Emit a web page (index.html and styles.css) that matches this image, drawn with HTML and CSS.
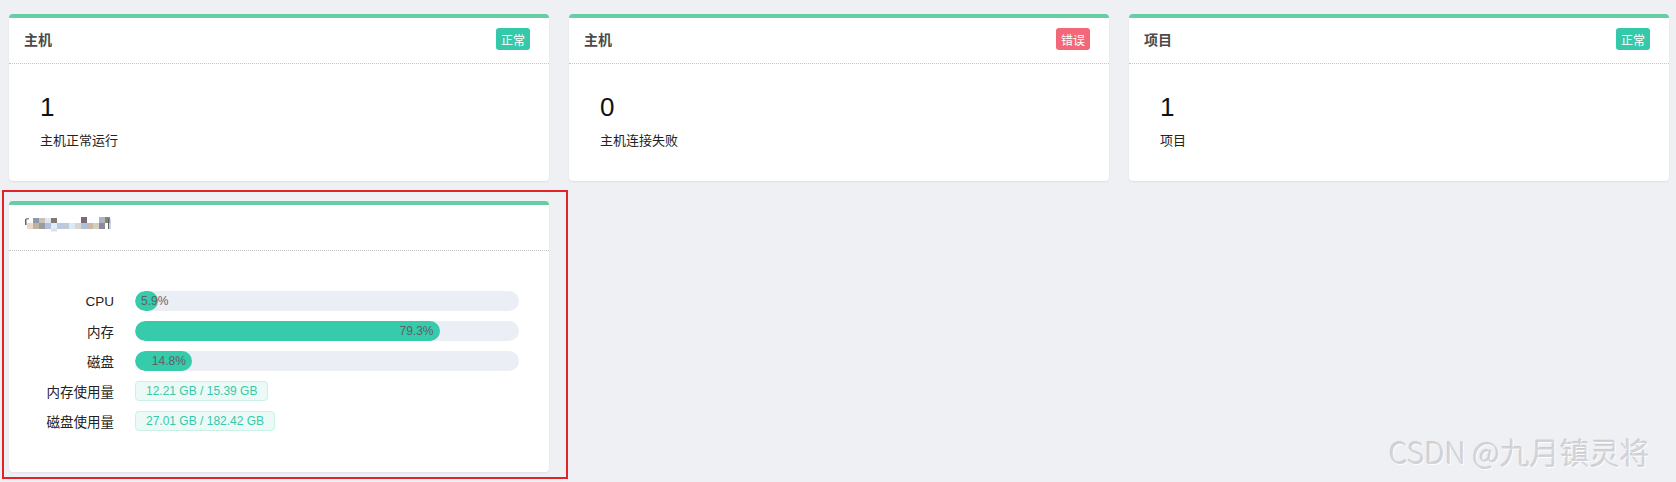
FILE: index.html
```html
<!DOCTYPE html>
<html lang="zh-CN">
<head>
<meta charset="utf-8">
<title>监控</title>
<link rel="stylesheet" href="styles.css">
</head>
<body>
<div class="page">
  <div class="grid">
    <div class="card">
      <div class="card-head">
        <span class="card-title">主机</span>
        <span class="badge badge-ok">正常</span>
      </div>
      <div class="card-body stat">
        <div class="stat-num">1</div>
        <div class="stat-label">主机正常运行</div>
      </div>
    </div>
    <div class="card">
      <div class="card-head">
        <span class="card-title">主机</span>
        <span class="badge badge-err">错误</span>
      </div>
      <div class="card-body stat">
        <div class="stat-num">0</div>
        <div class="stat-label">主机连接失败</div>
      </div>
    </div>
    <div class="card">
      <div class="card-head">
        <span class="card-title">项目</span>
        <span class="badge badge-ok">正常</span>
      </div>
      <div class="card-body stat">
        <div class="stat-num">1</div>
        <div class="stat-label">项目</div>
      </div>
    </div>
    <div class="card">
      <div class="card-head">
        <svg class="mosaic" width="90" height="16" viewBox="0 0 90 16">
          <rect x="0" y="2" width="1.5" height="6" fill="#6b6258"/>
          <rect x="1" y="1" width="3" height="1.5" fill="#9a8e80"/>
          <rect x="8" y="1" width="6" height="5" fill="#8d9aa6"/>
          <rect x="14" y="1" width="6" height="5" fill="#c9c1b9"/>
          <rect x="20" y="1" width="6" height="5" fill="#dfe6ee"/>
          <rect x="26" y="1" width="6" height="5" fill="#7f7b70"/>
          <rect x="56" y="0" width="6" height="6" fill="#7b6b79"/>
          <rect x="74" y="0" width="6" height="6" fill="#a9b5c1"/>
          <rect x="80" y="0" width="5" height="6" fill="#8a8478"/>
          <rect x="2" y="6" width="6" height="6" fill="#e9d9c9"/>
          <rect x="8" y="6" width="6" height="6" fill="#c1b1a1"/>
          <rect x="14" y="6" width="6" height="6" fill="#9b9ba1"/>
          <rect x="20" y="6" width="6" height="6" fill="#b1c1d9"/>
          <rect x="26" y="6" width="6" height="6" fill="#e1edf9"/>
          <rect x="32" y="6" width="6" height="6" fill="#b9c9e1"/>
          <rect x="38" y="6" width="6" height="6" fill="#c1c9d1"/>
          <rect x="44" y="6" width="6" height="6" fill="#d9e9f5"/>
          <rect x="50" y="6" width="6" height="6" fill="#d9d5d1"/>
          <rect x="56" y="6" width="6" height="6" fill="#b1c1d5"/>
          <rect x="62" y="6" width="6" height="6" fill="#c9b9a9"/>
          <rect x="68" y="6" width="6" height="6" fill="#d9cdc1"/>
          <rect x="74" y="6" width="6" height="6" fill="#8b8b99"/>
          <rect x="83" y="2" width="1" height="10" fill="#6b5f50"/>
          <rect x="84.5" y="2" width="1" height="10" fill="#7fb2e6"/>
          <rect x="26" y="12" width="6" height="2.5" fill="#e1dde5"/>
        </svg>
      </div>
      <div class="card-body detail">
        <div class="row">
          <div class="row-label">CPU</div>
          <div class="bar"><div class="bar-fill" style="width:5.9%"><span class="bar-text">5.9%</span></div></div>
        </div>
        <div class="row">
          <div class="row-label">内存</div>
          <div class="bar"><div class="bar-fill" style="width:79.3%"><span class="bar-text">79.3%</span></div></div>
        </div>
        <div class="row">
          <div class="row-label">磁盘</div>
          <div class="bar"><div class="bar-fill" style="width:14.8%"><span class="bar-text">14.8%</span></div></div>
        </div>
        <div class="row">
          <div class="row-label">内存使用量</div>
          <span class="tag">12.21 GB / 15.39 GB</span>
        </div>
        <div class="row">
          <div class="row-label">磁盘使用量</div>
          <span class="tag">27.01 GB / 182.42 GB</span>
        </div>
      </div>
    </div>
  </div>
  <div class="annot"></div>
  <div class="watermark">CSDN @九月镇灵将</div>
</div>
</body>
</html>
```

FILE: styles.css
```css
* { box-sizing: border-box; }
html, body {
  margin: 0;
  padding: 0;
  background: #eff0f4;
}
body {
  font-family: "Liberation Sans", "Noto Sans CJK SC", sans-serif;
  color: #222;
}
.page {
  position: relative;
  width: 1676px;
  height: 482px;
  padding: 14px 7px 0 9px;
}
.grid {
  display: grid;
  grid-template-columns: repeat(3, 1fr);
  gap: 20px;
  align-items: start;
}
.card {
  background: #fff;
  border-top: 4px solid #66cda4;
  border-radius: 4px;
  box-shadow: 0 1px 2px rgba(0, 0, 0, 0.07);
}
.card-head {
  height: 46px;
  display: flex;
  align-items: center;
  justify-content: space-between;
  padding: 0 19px 0 15px;
  border-bottom: 1px dotted #c4c4c4;
}
.card-title {
  font-size: 14px;
  font-weight: bold;
  color: #4a4a4a;
  margin-top: -3px;
}
.badge {
  display: inline-flex;
  align-items: center;
  height: 22px;
  padding: 0 5px;
  border-radius: 3px;
  font-size: 12px;
  color: #fff;
  margin-top: -3px;
}
.badge-ok { background: #36c9a9; }
.badge-err { background: #f26878; }
.mosaic {
  display: block;
  margin-top: -5px;
  margin-left: 1px;
}
.stat {
  padding: 28px 32px 31px 31px;
}
.stat-num {
  font-size: 26px;
  line-height: 30px;
  color: #111;
}
.stat-label {
  margin-top: 10px;
  font-size: 13px;
  line-height: 18px;
  color: #222;
}
.detail {
  padding: 40px 30px 41px 20px;
  display: flex;
  flex-direction: column;
  gap: 10px;
}
.row {
  display: flex;
  align-items: center;
  height: 20px;
}
.row-label {
  width: 85px;
  flex: none;
  text-align: right;
  font-size: 13.5px;
  color: #222;
  margin-right: 21px;
}
.bar {
  flex: 1;
  height: 20px;
  background: #ebeef5;
  border-radius: 10px;
  overflow: hidden;
}
.bar-fill {
  height: 100%;
  background: #36cbab;
  border-radius: 10px;
  text-align: right;
  white-space: nowrap;
  line-height: 20px;
}
.bar-text {
  display: inline-block;
  margin: 0 6px;
  font-size: 12px;
  color: #5f6166;
  vertical-align: top;
}
.tag {
  display: inline-flex;
  align-items: center;
  height: 20px;
  padding: 0 10px;
  border: 1px solid #c9f1e7;
  background: #ebfaf6;
  border-radius: 4px;
  font-size: 12px;
  color: #36c9a9;
  white-space: nowrap;
}
.annot {
  position: absolute;
  left: 2px;
  top: 190px;
  width: 566px;
  height: 289px;
  border: 2px solid #e3232a;
  pointer-events: none;
}
.watermark {
  position: absolute;
  left: 1389px;
  top: 433px;
  font-family: "Noto Sans CJK SC", sans-serif;
  font-weight: 300;
  font-size: 30px;
  line-height: 36px;
  color: #d3d4d8;
  text-shadow: 1px 1px 0 rgba(255, 255, 255, 0.9), -1px -1px 0 rgba(140, 140, 145, 0.35);
  white-space: nowrap;
}
```
